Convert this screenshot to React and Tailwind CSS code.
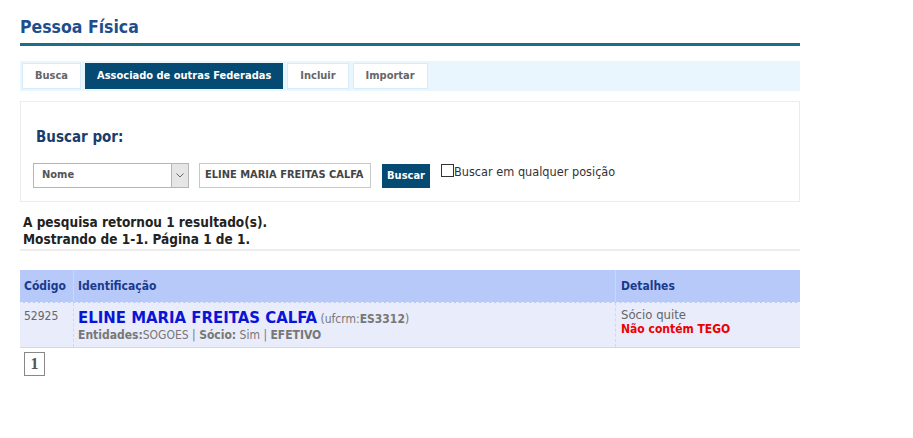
export default function App() {
  const font = { fontFamily: '"DejaVu Sans Condensed", "DejaVu Sans", sans-serif' };

  return (
    <div className="min-h-[438px] bg-white text-[12px] text-[#333]" style={font}>
      <div className="w-[780px] ml-5 pt-[16px]">
        <h1 className="text-[17.5px] font-bold text-[#1f4e8c] leading-[22px]">Pessoa Física</h1>
        <div className="h-[3px] bg-[#1a6e8a] mt-[5px]"></div>

        {/* Tabs */}
        <div className="mt-[15px] h-[30px] bg-[#eaf6fd] flex items-center gap-[4px] px-[2px] text-[11px] font-bold">
          <span className="h-[26px] px-[12px] flex items-center bg-white border border-[#d8ecf8] text-[#666]">Busca</span>
          <span className="h-[26px] px-[12px] flex items-center bg-[#054a72] text-white">Associado de outras Federadas</span>
          <span className="h-[26px] px-[12px] flex items-center bg-white border border-[#d8ecf8] text-[#666]">Incluir</span>
          <span className="h-[26px] px-[12px] flex items-center bg-white border border-[#d8ecf8] text-[#666]">Importar</span>
        </div>

        {/* Search box */}
        <div className="mt-[10px] h-[101px] border border-[#ececec] pl-[12px] pt-[26px]">
          <div className="pl-[3px] text-[15px] font-bold text-[#1a3d6b] leading-[18px]">Buscar por:</div>
          <div className="mt-[17px] flex items-start">
            <div className="w-[156px] h-[25px] border border-[#b5b5b5] bg-white flex items-center justify-between">
              <span className="pl-[8px] text-[11px] font-bold text-[#555]">Nome</span>
              <span className="w-[17px] h-[23px] bg-[#e6e6e6] border-l border-[#b5b5b5] flex items-center justify-center">
                <svg width="8" height="5" viewBox="0 0 8 5"><path d="M0.5 0.5 L4 4 L7.5 0.5" fill="none" stroke="#666" strokeWidth="1" /></svg>
              </span>
            </div>
            <div className="ml-[10px] w-[172px] h-[25px] border border-[#c8c8c8] bg-white flex items-center pl-[5px] text-[11px] font-bold text-[#444]">
              ELINE MARIA FREITAS CALFA
            </div>
            <div className="ml-[11px] mt-[1px] w-[48px] h-[24px] bg-[#054a72] text-white text-[11px] font-bold flex items-center justify-center">Buscar</div>
            <div className="ml-[11px] mt-[1px] w-[13px] h-[13px] border border-[#333] bg-white"></div>
            <span className="text-[12.6px] text-[#333] leading-[16px] mt-[1px]">Buscar em qualquer posição</span>
          </div>
        </div>

        {/* Results */}
        <div className="mt-[12px] pl-[3px] text-[13.5px] font-bold text-[#222] leading-[17px]">
          <div>A pesquisa retornou 1 resultado(s).</div>
          <div>Mostrando de 1-1. Página 1 de 1.</div>
        </div>
        <div className="mt-[1px] h-[2px] bg-[#ededed]"></div>

        {/* Table */}
        <div className="mt-[19px] text-[12px]">
          <div className="flex h-[33px] bg-[#b7c9f9] border-b border-dashed border-[#e8ecfb] text-[#1a3a8c] font-bold items-center">
            <div className="w-[53px] pl-[4px]">Código</div>
            <div className="w-[542px] pl-[4px] h-full flex items-center border-l border-[#c9d6fa]">Identificação</div>
            <div className="flex-1 pl-[5px] h-full flex items-center border-l border-[#c9d6fa]">Detalhes</div>
          </div>
          <div className="flex h-[45px] bg-[#e8ecfb] border-b border-[#d4d8e4]">
            <div className="w-[53px] pl-[4px] pt-[4px] text-[#666]">52925</div>
            <div className="w-[542px] pl-[4px] pt-[6px] border-l border-dashed border-[#d4d8e4]">
              <div className="leading-[18px]">
                <span className="text-[16.6px] font-bold text-[#0a14d6]">ELINE MARIA FREITAS CALFA</span>
                <span className="text-[12px] text-[#777]"> (ufcrm:<b>ES3312</b>)</span>
              </div>
              <div className="text-[12px] text-[#777] leading-[15px]">
                <b>Entidades:</b>SOGOES | <b>Sócio:</b> Sim | <b>EFETIVO</b>
              </div>
            </div>
            <div className="flex-1 pl-[5px] pt-[4px] border-l border-dashed border-[#d4d8e4] leading-[15px]">
              <div className="text-[13px] text-[#666]">Sócio quite</div>
              <div className="text-[#e00] font-bold">Não contém TEGO</div>
            </div>
          </div>
        </div>

        {/* Pagination */}
        <div className="mt-[4px] ml-[4px] w-[21px] h-[24px] border border-[#888] flex items-center justify-center text-[16px] font-bold text-[#555]" style={{ fontFamily: '"Liberation Serif", serif' }}>
          1
        </div>
      </div>
    </div>
  );
}
